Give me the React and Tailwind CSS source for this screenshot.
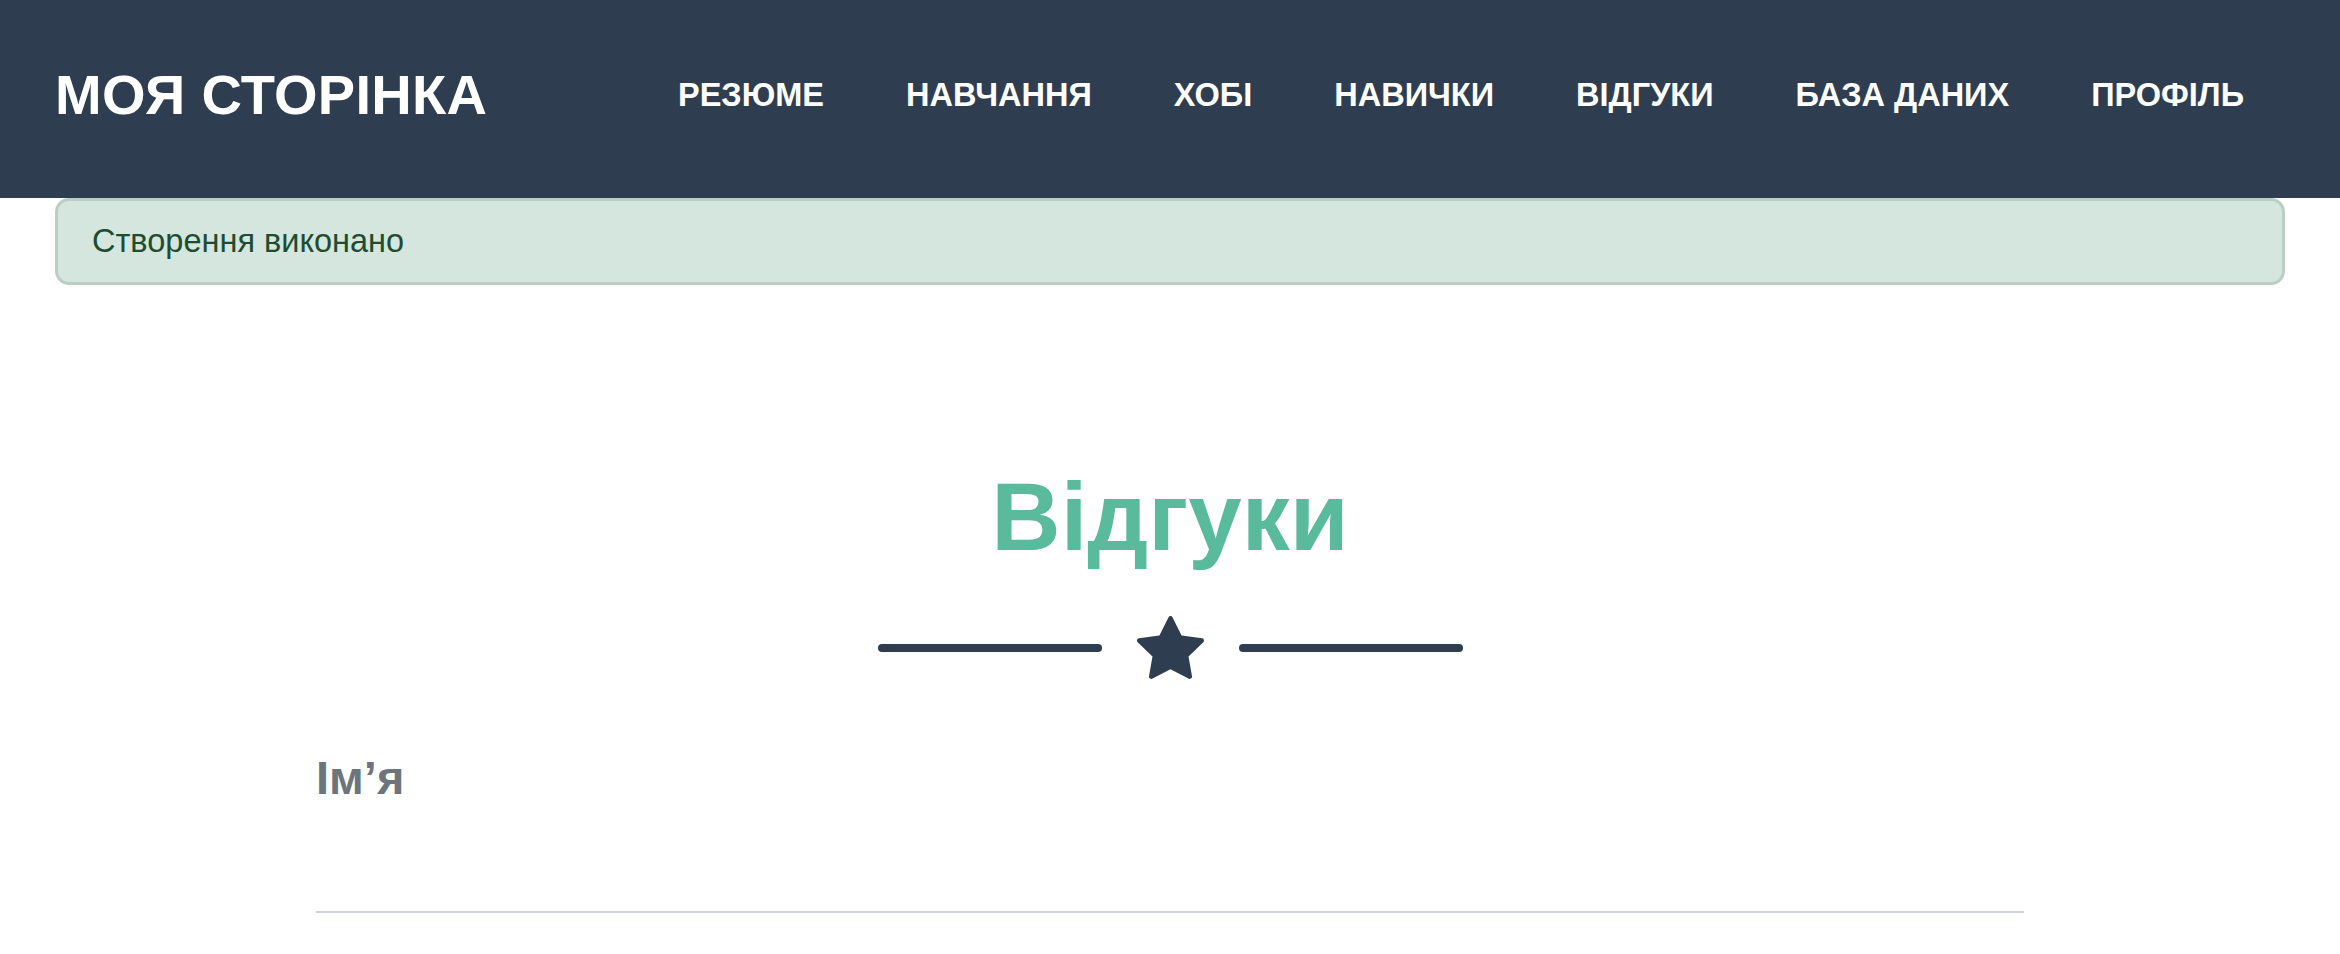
import React from 'react';

const navLinks = ['Резюме', 'Навчання', 'Хобі', 'Навички', 'Відгуки', 'База даних', 'Профіль'];

function StarIcon({ className }) {
  return (
    <svg viewBox="0 0.4 16 15.2" className={className} fill="currentColor">
      <path d="M3.612 15.443c-.386.198-.824-.149-.746-.592l.83-4.73L.173 6.765c-.329-.314-.158-.888.283-.95l4.898-.696L7.538.792c.197-.39.73-.39.927 0l2.184 4.327 4.898.696c.441.062.612.636.282.95l-3.522 3.356.83 4.73c.078.443-.36.79-.746.592L8 13.187l-4.389 2.256z" />
    </svg>
  );
}

export default function App() {
  return (
    <div className="min-h-screen bg-white font-['Liberation_Sans',Arial,sans-serif]">
      {/* navbar */}
      <nav className="bg-[#2e3e50] h-[198px] px-[55px] flex items-center justify-between pb-[8px]">
        <a className="text-white font-bold uppercase text-[56px] leading-none tracking-[0.3px]">Моя сторінка</a>
        <ul className="flex items-center">
          {navLinks.map((item) => (
            <li key={item}>
              <a className="block px-[41px] text-white font-bold uppercase text-[32.5px] leading-none">
                {item}
              </a>
            </li>
          ))}
        </ul>
      </nav>

      {/* flash message */}
      <div className="px-[55px]">
        <div className="h-[87px] flex items-center pl-[34px] bg-[#d4e6de] border-[3px] border-[#bccec4] rounded-[14px] text-[#1d4d30] text-[32.5px]">
          Створення виконано
        </div>
      </div>

      <section className="pt-[174px]">
        <h2 className="text-center text-[#59ba9c] font-bold text-[96px] leading-[1.2]">Відгуки</h2>

        <div className="flex items-center justify-center gap-[35px] mt-[41px]">
          <div className="w-[224px] h-[8px] rounded-full bg-[#2e3e50]" />
          <StarIcon className="w-[67px] h-[65px] text-[#2e3e50]" />
          <div className="w-[224px] h-[8px] rounded-full bg-[#2e3e50]" />
        </div>

        <form className="w-[1708px] mx-auto mt-[63px]">
          <div className="border-b-2 border-[#ced4da] h-[170px]">
            <label className="block text-[#6c757d] font-bold text-[47px] leading-[1.5]">Ім’я</label>
          </div>
        </form>
      </section>
    </div>
  );
}
